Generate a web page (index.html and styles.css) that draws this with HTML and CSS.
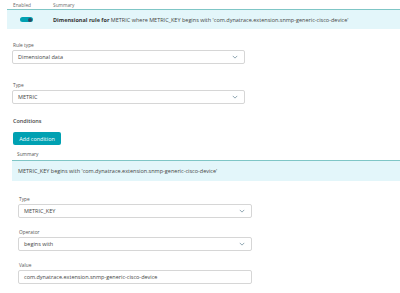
FILE: index.html
```html
<!DOCTYPE html>
<html lang="en">
<head>
    <meta charset="UTF-8">
    <meta name="viewport" content="width=device-width, initial-scale=1.0">
    <title>Dimensional rule</title>
    <link rel="stylesheet" href="styles.css">
</head>
<body>

<div class="table-head">
    <span class="col-enabled">Enabled</span>
    <span class="col-summary">Summary</span>
</div>

<div class="rule-row">
    <span class="toggle"><span class="knob"></span></span>
    <span class="rule-text"><b>Dimensional rule for</b> METRIC where METRIC_KEY begins with 'com.dynatrace.extension.snmp-generic-cisco-device'</span>
</div>

<div class="details">
    <label class="field-label">Rule type</label>
    <div class="select">
        <span>Dimensional data</span>
        <svg class="chevron" viewBox="0 0 8 5"><path d="M1 1l3 3 3-3" fill="none" stroke="#6b8a99" stroke-width="1"/></svg>
    </div>

    <label class="field-label">Type</label>
    <div class="select">
        <span>METRIC</span>
        <svg class="chevron" viewBox="0 0 8 5"><path d="M1 1l3 3 3-3" fill="none" stroke="#6b8a99" stroke-width="1"/></svg>
    </div>

    <h3 class="section-title">Conditions</h3>
    <button class="add-btn">Add condition</button>
</div>

<div class="conditions">
    <div class="sub-head">Summary</div>
    <div class="cond-row">METRIC_KEY begins with 'com.dynatrace.extension.snmp-generic-cisco-device'</div>

    <div class="cond-fields">
        <label class="field-label">Type</label>
        <div class="select">
            <span>METRIC_KEY</span>
            <svg class="chevron" viewBox="0 0 8 5"><path d="M1 1l3 3 3-3" fill="none" stroke="#6b8a99" stroke-width="1"/></svg>
        </div>

        <label class="field-label">Operator</label>
        <div class="select">
            <span>begins with</span>
            <svg class="chevron" viewBox="0 0 8 5"><path d="M1 1l3 3 3-3" fill="none" stroke="#6b8a99" stroke-width="1"/></svg>
        </div>

        <label class="field-label">Value</label>
        <div class="select">
            <span>com.dynatrace.extension.snmp-generic-cisco-device</span>
        </div>
    </div>
</div>

</body>
</html>
```

FILE: styles.css
```css
body {
    font-family: "Open Sans", "Noto Sans", sans-serif;
    color: #454646;
    background-color: white;
    margin: 0;
    font-size: 5.5px;
}
.table-head {
    display: flex;
    height: 9px;
    align-items: center;
    font-size: 4.8px;
    color: #6d6d6d;
}
.col-enabled {
    width: 40px;
    padding-left: 13px;
}
.rule-row {
    display: flex;
    align-items: center;
    margin-left: 7px;
    height: 19px;
    background-color: #e3f6fa;
    border-top: 1.5px solid #7fc6c6;
}
.toggle {
    width: 13px;
    height: 5px;
    margin-left: 13px;
    margin-right: 20px;
    background-color: #00a1b2;
    border-radius: 3px;
    position: relative;
}
.knob {
    position: absolute;
    right: 1px;
    top: 0.5px;
    width: 4px;
    height: 4px;
    border-radius: 50%;
    background-color: #2c4a66;
}
.rule-text b {
    font-weight: 700;
    color: #353535;
}
.details {
    padding-left: 12px;
    padding-top: 13px;
}
.field-label {
    display: block;
    font-size: 4.8px;
    color: #555;
    margin-left: 1px;
    margin-bottom: 2px;
}
.select {
    display: flex;
    justify-content: space-between;
    align-items: center;
    width: 233px;
    height: 14px;
    box-sizing: border-box;
    border: 1px solid #d6d6d6;
    border-radius: 2px;
    padding: 0 6px 0 5px;
    margin-bottom: 18px;
}
.chevron {
    width: 6px;
    height: 4px;
}
.section-title {
    font-size: 5.5px;
    font-weight: 600;
    margin: -5px 0 7px 1px;
}
.add-btn {
    font-family: "Open Sans", "Noto Sans", sans-serif;
    font-size: 5.5px;
    color: white;
    background-color: #00a1b2;
    border: none;
    border-radius: 2px;
    width: 48px;
    height: 13px;
    margin-left: 1px;
    padding: 0;
}
.conditions {
    padding-left: 12px;
    padding-top: 6px;
}
.sub-head {
    font-size: 4.8px;
    color: #555;
    padding-left: 5px;
    height: 9px;
}
.cond-row {
    display: flex;
    align-items: center;
    height: 20px;
    padding-left: 6px;
    background-color: #e3f6fa;
    border-top: 1.5px solid #7fc6c6;
    margin-bottom: 15px;
}
.cond-fields {
    padding-left: 6px;
}
.cond-fields .select {
    width: 234px;
    margin-bottom: 11px;
}
```
